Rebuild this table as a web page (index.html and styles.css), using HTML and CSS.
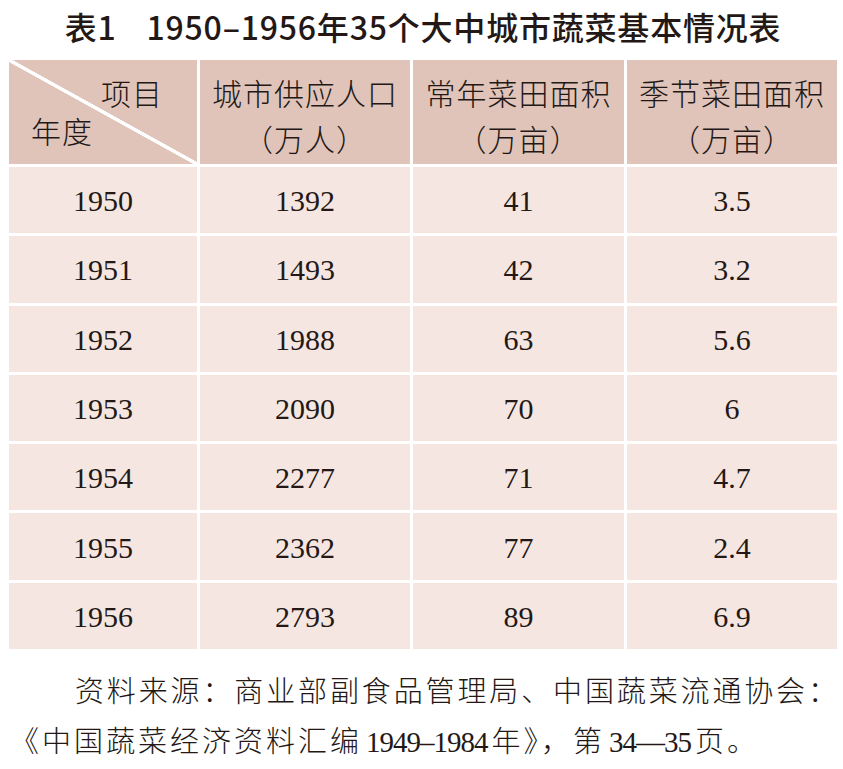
FILE: index.html
```html
<!DOCTYPE html>
<html>
<head>
<meta charset="utf-8">
<title>表1 1950–1956年35个大中城市蔬菜基本情况表</title>
<link rel="stylesheet" href="styles.css">
</head>
<body>
<div class="page">
  <h1 class="title">表1<span class="sp"></span>1950–1956年35个大中城市蔬菜基本情况表</h1>
  <div class="grid">
    <div class="cell head corner">
      <span class="c-item">项目</span>
      <span class="c-year">年度</span>
    </div>
    <div class="cell head"><span>城市供应人口</span><span>（万人）</span></div>
    <div class="cell head"><span>常年菜田面积</span><span>（万亩）</span></div>
    <div class="cell head"><span>季节菜田面积</span><span>（万亩）</span></div>

    <div class="cell num">1950</div><div class="cell num">1392</div><div class="cell num">41</div><div class="cell num">3.5</div>
    <div class="cell num">1951</div><div class="cell num">1493</div><div class="cell num">42</div><div class="cell num">3.2</div>
    <div class="cell num">1952</div><div class="cell num">1988</div><div class="cell num">63</div><div class="cell num">5.6</div>
    <div class="cell num">1953</div><div class="cell num">2090</div><div class="cell num">70</div><div class="cell num">6</div>
    <div class="cell num">1954</div><div class="cell num">2277</div><div class="cell num">71</div><div class="cell num">4.7</div>
    <div class="cell num">1955</div><div class="cell num">2362</div><div class="cell num">77</div><div class="cell num">2.4</div>
    <div class="cell num">1956</div><div class="cell num">2793</div><div class="cell num">89</div><div class="cell num">6.9</div>
  </div>
  <p class="note">
    <span class="l1">资料来源：商业部副食品管理局、中国蔬菜流通协会：</span>
    <span class="l2">《中国蔬菜经济资料汇编<span class="lat">1949–1984</span>年》，第<span class="lat">34—35</span>页。</span>
  </p>
</div>
</body>
</html>
```
FILE: styles.css
```css
html, body {
  margin: 0;
  padding: 0;
  background: #ffffff;
}
.page {
  width: 828px;
  margin-left: 9px;
  color: #231815;
}
.title {
  margin: 0;
  height: 60px;
  padding-top: 4px;
  box-sizing: border-box;
  text-align: center;
  font-family: "Liberation Sans Narrow", "Arial Narrow", "Noto Sans CJK SC", sans-serif;
  font-weight: 500;
  font-size: 32px;
  line-height: 44px;
  letter-spacing: 0.8px;
}
.title .sp {
  display: inline-block;
  width: 30px;
}
.grid {
  display: grid;
  grid-template-columns: 188px 210px 211px 210px;
  grid-template-rows: 104px repeat(7, 66.3px);
  gap: 3px;
}
.cell {
  background: #f5e6e1;
}
.head {
  background: #e0c4ba;
  display: flex;
  flex-direction: column;
  align-items: center;
  padding-top: 9px;
  box-sizing: border-box;
  font-family: "Noto Sans CJK SC", sans-serif;
  font-weight: 300;
  font-size: 30px;
  line-height: 46px;
  letter-spacing: 1px;
}
.corner {
  align-items: stretch;
  background: linear-gradient(to top right,
    #e0c4ba calc(50% - 2px),
    #ffffff calc(50% - 1.5px),
    #ffffff calc(50% + 1.5px),
    #e0c4ba calc(50% + 2px));
}
.c-item {
  align-self: flex-end;
  padding-right: 34px;
}
.c-year {
  align-self: flex-start;
  padding-left: 22px;
  margin-top: -8px;
}
.num {
  display: flex;
  align-items: center;
  justify-content: center;
  font-family: "Liberation Serif", "Times New Roman", "Tinos", "DejaVu Serif", serif;
  font-size: 30px;
  padding-top: 2px;
  box-sizing: border-box;
}
.note {
  margin: 15px 0 0 0;
  font-family: "Noto Sans CJK SC", sans-serif;
  font-weight: 300;
  font-size: 29px;
  line-height: 50px;
}
.note .lat {
  font-family: "Liberation Serif", "Times New Roman", "Tinos", serif;
  letter-spacing: -1px;
  padding: 0 4px;
}
.l1 {
  display: block;
  padding-left: 66px;
  text-align: justify;
  text-align-last: justify;
}
.l2 {
  display: block;
  margin-left: 1px;
  letter-spacing: 3px;
}
```
